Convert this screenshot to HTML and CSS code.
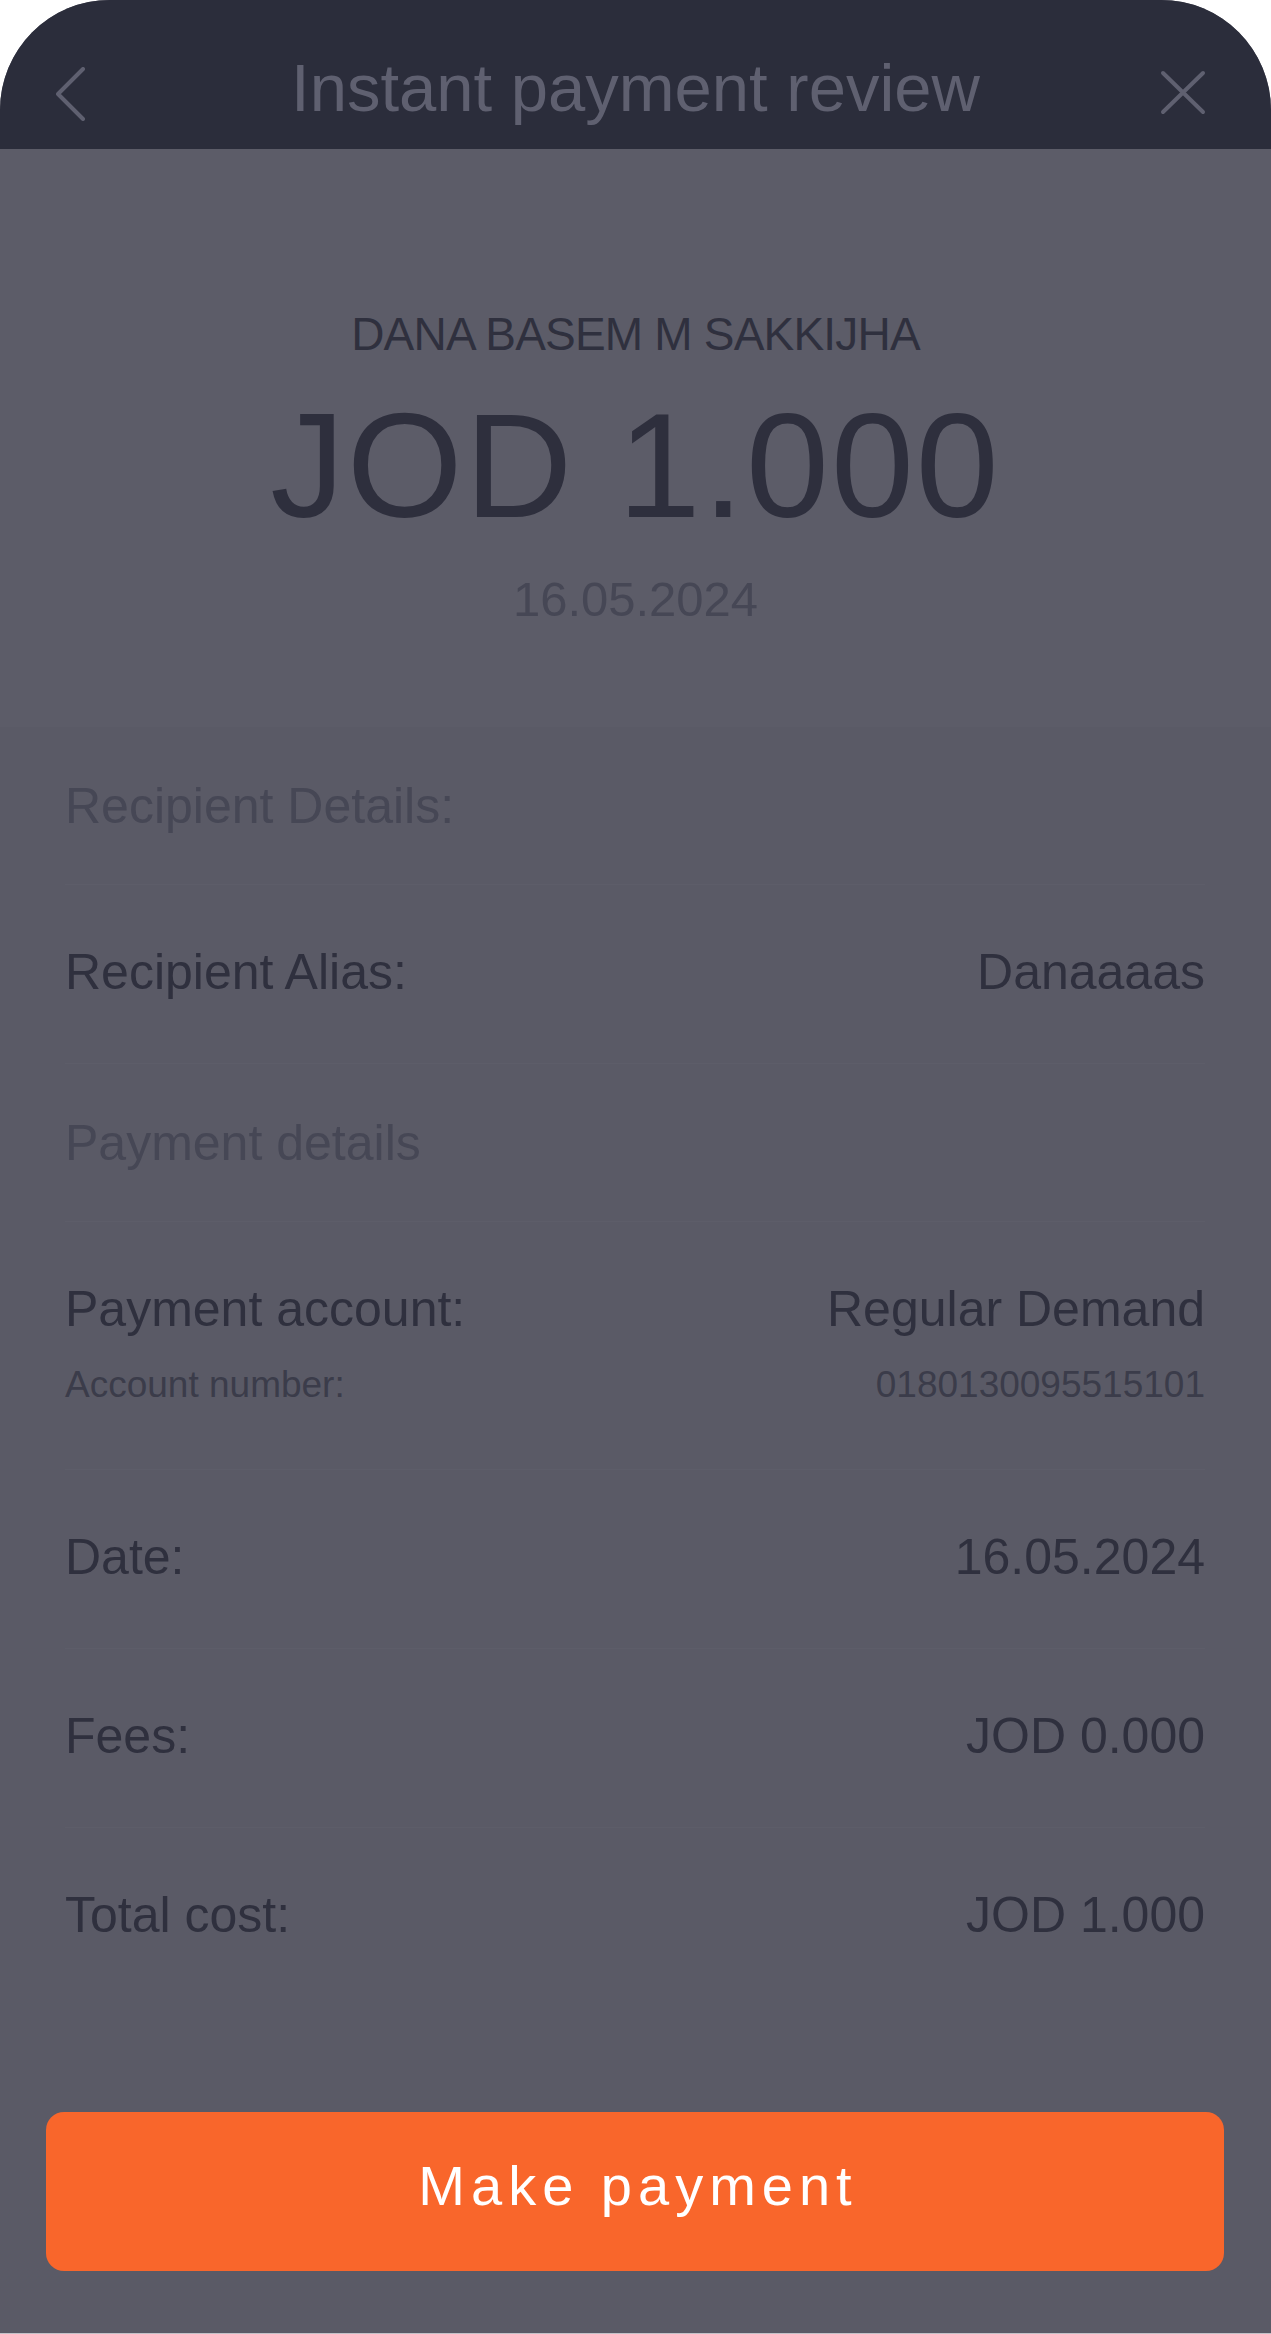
FILE: index.html
```html
<!DOCTYPE html>
<html lang="en">
<head>
<meta charset="utf-8">
<title>Instant payment review</title>
<link rel="stylesheet" href="styles.css">
</head>
<body>
<div class="screen">
  <header class="topbar">
    <div class="topbar-side">
      <svg class="icon-back" width="30" height="54" viewBox="0 0 30 54" aria-hidden="true">
        <path d="M27 2 L2 27 L27 52" fill="none" stroke="#5f6070" stroke-width="4" stroke-linecap="round" stroke-linejoin="round"/>
      </svg>
    </div>
    <h1 class="topbar-title">Instant payment review</h1>
    <div class="topbar-side topbar-side-right">
      <svg class="icon-close" width="46" height="46" viewBox="0 0 46 46" aria-hidden="true">
        <path d="M3 3 L43 42 M43 3 L3 42" fill="none" stroke="#5f6070" stroke-width="4" stroke-linecap="round"/>
      </svg>
    </div>
  </header>

  <section class="hero">
    <div class="hero-name">DANA BASEM M SAKKIJHA</div>
    <div class="hero-amount">JOD 1.000</div>
    <div class="hero-date">16.05.2024</div>
  </section>

  <section class="details">
    <div class="row head">Recipient Details:</div>
    <div class="row">
      <div class="line"><span>Recipient Alias:</span><span>Danaaaas</span></div>
    </div>
    <div class="row head">Payment details</div>
    <div class="row row-account">
      <div class="line"><span>Payment account:</span><span>Regular Demand</span></div>
      <div class="line small"><span>Account number:</span><span>0180130095515101</span></div>
    </div>
    <div class="row">
      <div class="line"><span>Date:</span><span>16.05.2024</span></div>
    </div>
    <div class="row">
      <div class="line"><span>Fees:</span><span>JOD 0.000</span></div>
    </div>
    <div class="row last">
      <div class="line"><span>Total cost:</span><span>JOD 1.000</span></div>
    </div>
  </section>

  <button class="pay-btn" type="button">Make payment</button>
</div>
</body>
</html>
```

FILE: styles.css
```css
html, body {
  margin: 0;
  padding: 0;
  background: #ffffff;
}

body {
  font-family: "Liberation Sans", Arial, sans-serif;
}

.screen {
  box-sizing: border-box;
  width: 1271px;
  height: 2334px;
  display: flex;
  flex-direction: column;
  background: #5a5a66;
  border-radius: 110px 110px 0 0;
  overflow: hidden;
  border-bottom: 1px solid #c2c2c8;
}

/* Header */
.topbar {
  height: 149px;
  flex: none;
  display: grid;
  grid-template-columns: 150px 1fr 150px;
  align-items: start;
  background: #2b2d3b;
}

.topbar-side {
  display: flex;
}

.topbar-side-right {
  justify-content: flex-end;
}

.icon-back {
  margin-top: 67px;
  margin-left: 56px;
}

.icon-close {
  margin-top: 70px;
  margin-right: 65px;
}

.topbar-title {
  margin: 54px 0 0;
  font-size: 67px;
  line-height: 67px;
  font-weight: 400;
  text-align: center;
  color: #5f6070;
  white-space: nowrap;
}

/* Hero */
.hero {
  flex: none;
  display: flex;
  flex-direction: column;
  align-items: center;
  background: #5c5c68;
  padding-top: 162px;
  padding-bottom: 103px;
}

.hero-name {
  font-size: 46px;
  line-height: 46px;
  letter-spacing: -0.8px;
  color: #2f303e;
}

.hero-amount {
  margin-top: 34px;
  font-size: 149px;
  line-height: 149px;
  letter-spacing: 2px;
  color: #2e2f3d;
}

.hero-date {
  margin-top: 35px;
  font-size: 49px;
  line-height: 49px;
  color: #464755;
}

/* Details list */
.details {
  flex: none;
  margin: 0 66px 0 65px;
}

.row {
  padding: 62px 0 66px;
  border-bottom: 1px solid #5d5d69;
  font-size: 50px;
  line-height: 50px;
  color: #2f303e;
}

.row.head {
  padding: 54px 0 53px;
  color: #464755;
}

.row.last {
  border-bottom: none;
  padding-bottom: 0;
}

.line {
  display: flex;
  justify-content: space-between;
  align-items: baseline;
}

.line.small {
  margin-top: 32px;
  font-size: 37px;
  line-height: 37px;
  color: #3b3c4a;
}

/* Button */
.pay-btn {
  margin: auto 47px 62px 46px;
  height: 159px;
  flex: none;
  border: none;
  border-radius: 18px;
  background: #f9662b;
  color: #ffffff;
  font-family: "Liberation Sans", Arial, sans-serif;
  font-size: 56px;
  line-height: 56px;
  letter-spacing: 6px;
  padding: 0 0 12px 6px;
  cursor: pointer;
}
```
